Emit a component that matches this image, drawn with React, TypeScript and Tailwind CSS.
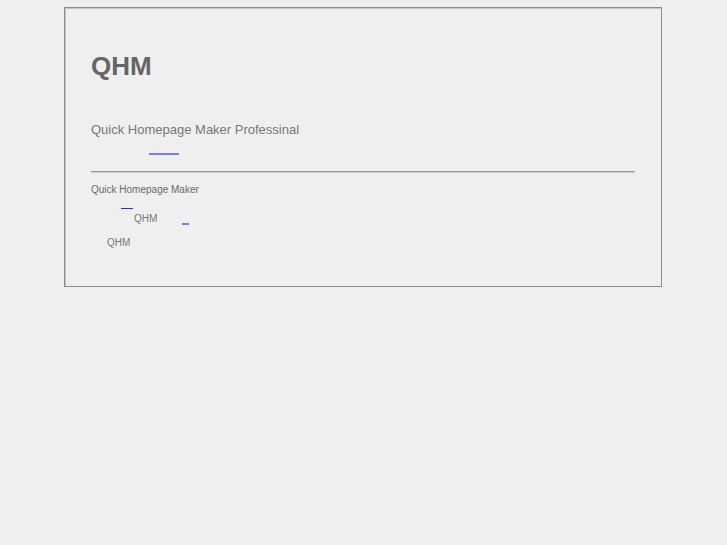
const App = () => {
  return (
    <div className="min-h-[545px] w-full bg-[#efefef] pt-[7px] font-['Liberation_Sans',Arial,sans-serif]">
      <div className="ml-[64px] h-[280px] w-[598px] border border-[#8c8c8c] px-[26px] shadow-[inset_1px_1px_0_#c4c4c4]">
        <h1 className="mt-[43px] text-[26px] font-bold leading-[30px] text-[#666]">QHM</h1>
        <p className="mt-[41px] text-[13px] leading-[16px] text-[#777]">
          Quick Homepage Maker Professinal
        </p>
        <a href="#" className="mt-[15px] ml-[58px] block h-[2px] w-[30px] bg-[#7b7bf0]"></a>
        <hr className="mt-[16px] border-0 border-t border-b border-t-[#9a9a9a] border-b-[#d0d0d0]" />
        <p className="mt-[11px] text-[10px] leading-[12px] text-[#6a6a6a]">Quick Homepage Maker</p>
        <div className="mt-[12px] flex items-start">
          <a href="#" className="ml-[30px] block h-px w-[12px] bg-[#2a2aff]"></a>
          <span className="ml-px mt-[5px] text-[10px] leading-[12px] text-[#777]">QHM</span>
          <a href="#" className="ml-[25px] mt-[15px] block h-[2px] w-[7px] bg-[#7b7bf0]"></a>
        </div>
        <p className="mt-[12px] pl-[16px] text-[10px] leading-[12px] text-[#777]">QHM</p>
      </div>
    </div>
  );
};

export default App;
